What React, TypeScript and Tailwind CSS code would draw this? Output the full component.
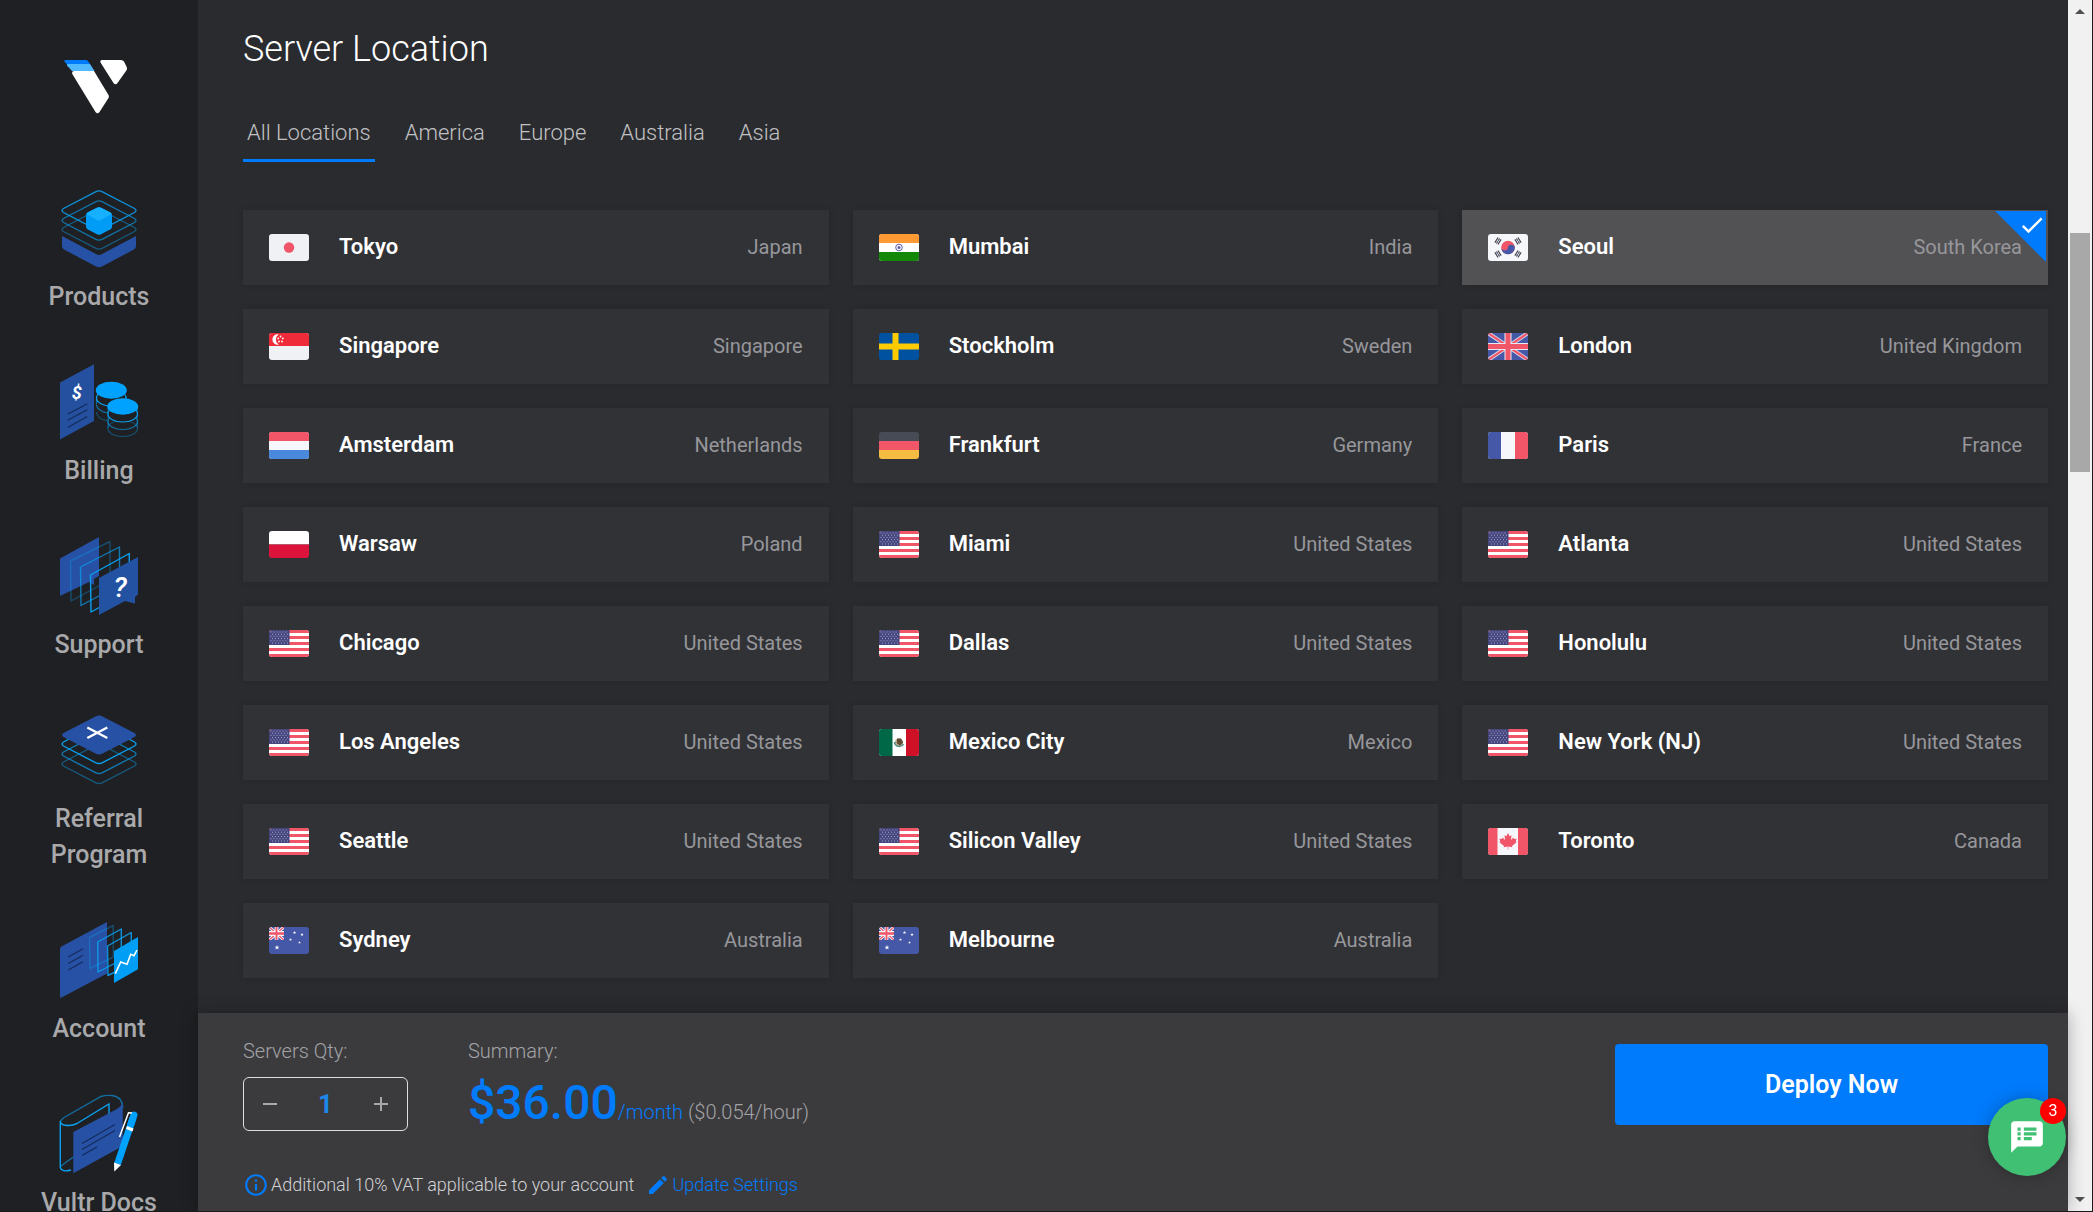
import { useState, type ReactNode } from "react";
import {
  MdAdd,
  MdArrowDropDown,
  MdArrowDropUp,
  MdCheck,
  MdEdit,
  MdInfoOutline,
  MdRemove,
  MdSpeakerNotes,
} from "react-icons/md";

interface ILocation {
  city: string;
  country: string;
}

const LOCATIONS: ILocation[] = [
  { city: "Tokyo", country: "Japan" },
  { city: "Mumbai", country: "India" },
  { city: "Seoul", country: "South Korea" },
  { city: "Singapore", country: "Singapore" },
  { city: "Stockholm", country: "Sweden" },
  { city: "London", country: "United Kingdom" },
  { city: "Amsterdam", country: "Netherlands" },
  { city: "Frankfurt", country: "Germany" },
  { city: "Paris", country: "France" },
  { city: "Warsaw", country: "Poland" },
  { city: "Miami", country: "United States" },
  { city: "Atlanta", country: "United States" },
  { city: "Chicago", country: "United States" },
  { city: "Dallas", country: "United States" },
  { city: "Honolulu", country: "United States" },
  { city: "Los Angeles", country: "United States" },
  { city: "Mexico City", country: "Mexico" },
  { city: "New York (NJ)", country: "United States" },
  { city: "Seattle", country: "United States" },
  { city: "Silicon Valley", country: "United States" },
  { city: "Toronto", country: "Canada" },
  { city: "Sydney", country: "Australia" },
  { city: "Melbourne", country: "Australia" },
];

const TABS = ["All Locations", "America", "Europe", "Australia", "Asia"];

const STAR =
  "M0 -1 L0.25 -0.33 L0.95 -0.31 L0.4 0.13 L0.59 0.81 L0 0.42 L-0.59 0.81 L-0.4 0.13 L-0.95 -0.31 L-0.25 -0.33 Z";

// Diamond outline shared by the stacked icons, centred on y = 0
const DIAMOND =
  "M36.5 -18.6 Q40 -20.5 43.5 -18.6 L75.5 -2 Q78.5 0 75.5 2 L43.5 18.6 Q40 20.5 36.5 18.6 L4.5 2 Q1.5 0 4.5 -2 Z";

const UnionJack = () => (
  <>
    <path fill="#4558a8" d="M0 0h40v27H0z" />
    <path stroke="#d5d9ea" strokeWidth="4" d="M0 0L40 27M40 0L0 27" />
    <path stroke="#f05568" strokeWidth="2.2" d="M0 0L40 27M40 0L0 27" />
    <path stroke="#e6e8f2" strokeWidth="7" d="M20 0v27M0 13.5h40" />
    <path stroke="#f05568" strokeWidth="5" d="M20 0v27M0 13.5h40" />
  </>
);

const Trigram = ({ x, y, angle }: { x: number; y: number; angle: number }) => (
  <g transform={`translate(${x} ${y}) rotate(${angle})`} stroke="#464655" strokeWidth="1.2">
    <path d="M-3 -1.8h6M-3 0h2.7M.3 0H3M-3 1.8h6" />
  </g>
);

const FLAGS: Record<string, ReactNode> = {
  Japan: (
    <>
      <path fill="#f0f1f5" d="M0 0h40v27H0z" />
      <circle cx="20" cy="13.5" r="5.2" fill="#f05468" />
    </>
  ),
  India: (
    <>
      <path fill="#fff" d="M0 0h40v27H0z" />
      <path fill="#ff9933" d="M0 0h40v9H0z" />
      <path fill="#138808" d="M0 18h40v9H0z" />
      <circle cx="20" cy="13.5" r="3.3" fill="none" stroke="#5a5aa8" />
      <circle cx="20" cy="13.5" r="1.5" fill="#5a5aa8" />
    </>
  ),
  "South Korea": (
    <>
      <path fill="#f5f7fb" d="M0 0h40v27H0z" />
      <circle cx="20" cy="13.5" r="6.8" fill="#f05568" />
      <path
        fill="#4558a8"
        transform="rotate(10 20 13.5)"
        d="M13.2 13.5a6.8 6.8 0 0 0 13.6 0a3.4 3.4 0 0 0 -6.8 0a3.4 3.4 0 0 1 -6.8 0z"
      />
      <Trigram x={10} y={7} angle={-58} />
      <Trigram x={30} y={7} angle={58} />
      <Trigram x={10} y={20} angle={58} />
      <Trigram x={30} y={20} angle={-58} />
    </>
  ),
  Singapore: (
    <>
      <path fill="#f0f1f5" d="M0 0h40v27H0z" />
      <path fill="#ef2b3a" d="M0 0h40v13H0z" />
      <path fill="#fff" d="M10 1.5a5.2 5.2 0 1 0 0 10a5.6 5.6 0 0 1 0 -10z" />
      {[
        [11.5, 3.5],
        [9.2, 5.4],
        [13.8, 5.4],
        [10, 8.5],
        [13, 8.5],
      ].map(([x, y]) => (
        <circle key={`${x}-${y}`} cx={x} cy={y} r="0.9" fill="#fff" />
      ))}
    </>
  ),
  Sweden: (
    <>
      <path fill="#0052a0" d="M0 0h40v27H0z" />
      <path stroke="#fecb00" strokeWidth="6" d="M16.5 0v27M0 13.5h40" />
    </>
  ),
  "United Kingdom": <UnionJack />,
  Netherlands: (
    <>
      <path fill="#f5f7fb" d="M0 0h40v27H0z" />
      <path fill="#f05568" d="M0 0h40v9H0z" />
      <path fill="#4a88dc" d="M0 18h40v9H0z" />
    </>
  ),
  Germany: (
    <>
      <path fill="#464b55" d="M0 0h40v9H0z" />
      <path fill="#f05568" d="M0 9h40v9H0z" />
      <path fill="#f5bc42" d="M0 18h40v9H0z" />
    </>
  ),
  France: (
    <>
      <path fill="#f5f7fb" d="M0 0h40v27H0z" />
      <path fill="#4558a8" d="M0 0h13v27H0z" />
      <path fill="#f05568" d="M27 0h13v27H27z" />
    </>
  ),
  Poland: (
    <>
      <path fill="#fff" d="M0 0h40v13.5H0z" />
      <path fill="#dc143c" d="M0 13.5h40V27H0z" />
    </>
  ),
  "United States": (
    <>
      <path fill="#fff" d="M0 0h40v27H0z" />
      <path
        stroke="#f05568"
        strokeWidth="3"
        d="M0 1.5h40M0 7.5h40M0 13.5h40M0 19.5h40M0 25.5h40"
      />
      <path fill="#46467f" d="M0 0h20.5v15H0z" />
      <path
        stroke="#a9a9cc"
        strokeDasharray="1 2"
        d="M1.5 2h18M3 4.2h16M1.5 6.4h18M3 8.6h16M1.5 10.8h18M3 13h16"
      />
    </>
  ),
  Mexico: (
    <>
      <path fill="#fff" d="M0 0h40v27H0z" />
      <path fill="#006847" d="M0 0h13.5v27H0z" />
      <path fill="#ce1126" d="M27 0h13v27H27z" />
      <circle cx="20" cy="13.5" r="4" fill="#b7a689" />
      <path stroke="#4f8f8c" strokeWidth="1.5" fill="none" d="M15.5 13a4.8 4.8 0 0 0 9 2" />
      <path fill="#5f4a34" d="M18 9.5l4 0l2 4l-3 3l-3 -2z" />
    </>
  ),
  Canada: (
    <>
      <path fill="#f5f7fb" d="M0 0h40v27H0z" />
      <path fill="#f05568" d="M0 0h9.5v27H0zM30 0h10v27H30z" />
      <path
        fill="#f05568"
        d="M20 5l1.7 3.2l1.8 -1l-.6 4.8l2.6 -2.4l.6 1.5l2.6 -.4l-1 2.8l.9 .8l-4.6 3.6l.3 1.3l-4 -.6v3h-.6v-3l-4 .6l.3 -1.3l-4.6 -3.6l.9 -.8l-1 -2.8l2.6 .4l.6 -1.5l2.6 2.4l-.6 -4.8l1.8 1z"
      />
    </>
  ),
  Australia: (
    <>
      <path fill="#4558a8" d="M0 0h40v27H0z" />
      <svg width="15" height="13" viewBox="0 0 40 27" preserveAspectRatio="none">
        <path fill="#4558a8" d="M0 0h40v27H0z" />
        <path stroke="#f5f7fb" strokeWidth="7" d="M0 0L40 27M40 0L0 27" />
        <path stroke="#f05568" strokeWidth="3" d="M0 0L40 27M40 0L0 27" />
        <path stroke="#f5f7fb" strokeWidth="10" d="M20 0v27M0 13.5h40" />
        <path stroke="#f05568" strokeWidth="5" d="M20 0v27M0 13.5h40" />
      </svg>
      {[
        [8, 20.5, 2.6],
        [25.5, 5.5, 1.8],
        [33, 7.5, 1.8],
        [21.5, 12.5, 1.6],
        [30.5, 15.5, 1.4],
      ].map(([x, y, r]) => (
        <path
          key={`${x}-${y}`}
          d={STAR}
          fill="#f5f7fb"
          transform={`translate(${x} ${y}) scale(${r})`}
        />
      ))}
    </>
  ),
};

const ProductsIcon = () => (
  <>
    <path fill="#2751a5" d="M3 48L37 66Q40 68 43 66L77 48V58Q77 60.5 75 61.5L43 78.5Q40 80 37 78.5L5 61.5Q3 60.5 3 58Z" />
    <g fill="none" stroke="#0aa0f0" strokeWidth="1.3">
      <path d={DIAMOND} transform="translate(0 41.5)" opacity="0.45" />
      <path d={DIAMOND} transform="translate(0 32.5)" opacity="0.65" />
      <path d={DIAMOND} transform="translate(0 22.5)" opacity="0.9" />
    </g>
    <path fill="#009cf5" d="M27 27Q27 25.5 28.5 24.5L38 19.7Q40 18.7 42 19.7L51.5 24.5Q53 25.5 53 27V38.5Q53 40.5 51.5 41.3L42 46.3Q40 47.3 38 46.3L28.5 41.3Q27 40.5 27 38.5Z" />
    <path fill="#16b0ff" d="M27.5 26Q28 25 28.5 24.5L38 19.7Q40 18.7 42 19.7L51.5 24.5Q52.5 25 52.5 26L42 32Q40 33 38 32Z" />
  </>
);

const BillingIcon = () => (
  <>
    <path fill="#24509f" d="M1 20.5L35 2.3V59L1 77.5Z" />
    <path stroke="#142c5c" strokeWidth="1.3" d="M8.7 52.3L28.3 41.7M8.7 58.3L28.3 47.7M8.7 65.5L28.3 54.5" />
    <text
      x="17.7"
      y="37"
      textAnchor="middle"
      fill="#fff"
      className="font-['Roboto',sans-serif] text-[18px] font-bold italic"
    >
      $
    </text>
    <g fill="none" stroke="#0aa0f0" strokeWidth="1.2">
      <ellipse cx="52.3" cy="36" rx="14.8" ry="8" />
      <path d="M37.5 42.5C37.5 47 43 50.5 50 51M67 43V35M37.5 34V42" opacity="0.6" />
      <path d="M37.5 50C37.5 54 42 58 48 58.7" opacity="0.4" />
    </g>
    <ellipse cx="52.3" cy="28.3" rx="15.5" ry="8.5" fill="#00a2ff" />
    <g stroke="#0aa0f0" strokeWidth="1.2">
      <ellipse cx="63.7" cy="66.5" rx="14.8" ry="8" fill="none" opacity="0.4" />
      <ellipse cx="63.7" cy="59.5" rx="14.8" ry="8" fill="#1f2023" fillOpacity="0.5" opacity="0.65" />
      <ellipse cx="63.7" cy="52" rx="14.8" ry="8" fill="#1f2023" />
      <path d="M49 46V66M78.5 46V66" opacity="0.35" />
    </g>
    <ellipse cx="63.7" cy="44.5" rx="15.5" ry="8.3" fill="#00a2ff" />
  </>
);

const SupportIcon = () => (
  <>
    <path fill="#2751a5" d="M1 22.5L40 1V40L35 43V49L30 46L1 60Z" />
    <g fill="none" stroke="#0aa0f0" strokeWidth="1.4" strokeLinejoin="round">
      <path d="M11.5 25L51 5.5V44L12 65Z" opacity="0.35" />
      <path d="M21.5 31L60.5 11V49L22 69.5Z" opacity="0.7" />
      <path d="M31.5 39L70.3 17.5V55L32 76Z" />
    </g>
    <path fill="#2452a3" d="M40 42L79 21V58.5L76 61V67.5L66 65L40 79Z" />
    <text
      x="61"
      y="61"
      textAnchor="middle"
      fill="#fff"
      className="font-['Roboto',sans-serif] text-[28px] font-medium italic"
    >
      ?
    </text>
  </>
);

const ReferralIcon = () => (
  <>
    <g fill="none" stroke="#0aa0f0" strokeWidth="1.4">
      <path d={DIAMOND} transform="translate(0 54)" opacity="0.45" />
      <path d={DIAMOND} transform="translate(0 44)" opacity="0.7" />
      <path d={DIAMOND} transform="translate(0 34)" />
    </g>
    <path fill="#2751a5" d={DIAMOND} transform="translate(0 25)" />
    <path stroke="#fff" strokeWidth="2.4" d="M28.3 17.5L48.3 28M48.3 17.5L28.3 28" />
  </>
);

const AccountIcon = () => (
  <>
    <path fill="#2751a5" d="M1 29Q1 27.5 2.5 26.5L48 2V53.5L2.5 77.5Q1 78 1 77Z" />
    <path stroke="#142c5c" strokeWidth="1.3" d="M9.3 37L24 28.7M9.3 43.5L24 35.2M9.3 50L24 41.7" />
    <g fill="none" stroke="#0aa0f0" strokeWidth="1.4" strokeLinejoin="round">
      <path d="M30.5 17.5L54.3 5.5V37L31 48.5Z" opacity="0.35" />
      <path d="M38.7 22L62.3 9V40L39 52Z" opacity="0.9" />
      <path d="M48.5 26L72.3 12.5V44L49 55.5Z" opacity="0.9" />
    </g>
    <path fill="#009ff5" d="M55 31L79 17V49.3L55 63Z" />
    <path
      fill="none"
      stroke="#fff"
      strokeWidth="1.6"
      d="M56.3 53.7L61.7 42L68 44.3L71.7 34.3L75 35.7L78 30"
    />
  </>
);

const DocsIcon = () => (
  <>
    <g fill="none" stroke="#0aa0f0" strokeWidth="1.4">
      <path d="M1.3 28Q1.5 26 5 23.5L42 2.5Q46 1 53 1.5Q63.7 3 63.7 14" opacity="0.6" />
      <path d="M1.3 73Q4 70 16 62" opacity="0.6" />
      <path d="M50 20V10L18 29.5Q12 32.5 5 31Q1.3 30 1.3 27V73.5Q3 78.5 12 76" />
    </g>
    <path fill="#2751a5" d="M14.3 38L58 15Q62 12.5 63.7 9V52L14.3 79.3Z" />
    <path stroke="#142c5c" strokeWidth="1.3" d="M23 49.5L56 30.5M23 55.5L56 36.5M23 61.5L38 53" />
    <path stroke="#00a2ff" strokeWidth="7" strokeLinecap="round" d="M75 21L72 30" />
    <path stroke="#00a2ff" strokeWidth="7" d="M74 24L58.5 70" />
    <path stroke="#fff" strokeWidth="3" d="M67.5 33.5L74 36" />
    <path fill="#fff" d="M55 68.5L62 71L55.3 77.5Z" />
    <path fill="none" stroke="#fff" strokeWidth="1.5" d="M73 19L69.5 18.7L60.5 43" />
  </>
);

const NAV_ITEMS = [
  { label: "Products", icon: <ProductsIcon /> },
  { label: "Billing", icon: <BillingIcon /> },
  { label: "Support", icon: <SupportIcon /> },
  { label: "Referral Program", icon: <ReferralIcon /> },
  { label: "Account", icon: <AccountIcon /> },
  { label: "Vultr Docs", icon: <DocsIcon /> },
];

const Sidebar = () => (
  <aside className="flex w-[198px] shrink-0 flex-col items-center overflow-hidden bg-[#1f2023] pt-[60px]">
    <a href="#home" aria-label="Vultr" className="pr-1.5">
      <svg className="h-[54px] w-16" viewBox="0 0 64 54">
        <path fill="#007bfc" d="M1.5 0H22Q23.5 0 24.3 1.5L26 4H3L.3 1.8Q0 0 1.5 0Z" />
        <path fill="#51b9ff" d="M3.5 4H26L30.5 11H8L3 5.5Q2.5 4 3.5 4Z" />
        <path
          fill="#fff"
          d="M10 11H30L44.5 35Q45.2 36.5 44.5 38L35.5 52Q33.5 54.5 31.5 52L8.3 14Q7.5 11 10 11Z"
        />
        <path
          fill="#fff"
          d="M38 0H57Q59 0 60 1.5L62.7 7Q63.5 8.5 62.7 10L53.5 23Q51.5 25.5 49.5 23L36.5 2.5Q35.8 0 38 0Z"
        />
      </svg>
    </a>
    <nav className="mt-[74px] flex flex-col gap-[47px]">
      {NAV_ITEMS.map(({ label, icon }) => (
        <a
          key={label}
          href="#nav"
          className="flex w-36 flex-col items-center gap-[11px] text-center text-[25px] leading-9 font-medium text-[#a9a9ab]"
        >
          <svg className="size-20" viewBox="0 0 80 80">
            {icon}
          </svg>
          {label}
        </a>
      ))}
    </nav>
  </aside>
);

interface LocationCardProps {
  location: ILocation;
  selected: boolean;
  onSelect: (city: string) => void;
}

const LocationCard = ({ location, selected, onSelect }: LocationCardProps) => (
  <button
    onClick={() => onSelect(location.city)}
    aria-pressed={selected}
    className={`relative flex h-[75px] items-center px-[26px] shadow-[0_0_6px_rgba(0,0,0,0.12)] ${
      selected ? "bg-[#525254]" : "bg-[#313236]"
    }`}
  >
    <svg className="h-[27px] w-10 rounded-[3px]" viewBox="0 0 40 27">
      {FLAGS[location.country]}
    </svg>
    <span className="ml-[30px] grow pb-0.5 text-left text-[22px] leading-7 font-semibold text-white">
      {location.city}
    </span>
    <span className="pb-0.5 text-xl text-[#97979b]">{location.country}</span>
    {selected && (
      <span className="absolute top-px right-0.5 flex size-[51px] justify-end bg-[#007bfc] text-white [clip-path:polygon(0_0,100%_0,100%_100%)]">
        <MdCheck className="size-7" />
      </span>
    )}
  </button>
);

const DeployBar = () => {
  const [qty, setQty] = useState(1);

  return (
    <footer className="relative bg-[#3b3b3e] pt-6 pr-5 pb-3 pl-[45px] shadow-[0_0_16px_rgba(0,0,0,0.3)]">
      <div className="flex items-start">
        <div className="w-[225px]">
          <label htmlFor="qty" className="block text-xl font-light text-[#a3a3a6]">
            Servers Qty:
          </label>
          <div className="mt-3 flex h-[54px] w-[165px] items-center justify-between rounded-md border border-[#dedede] px-3.5 text-[#a9a9ab]">
            <button aria-label="Remove server" onClick={() => setQty(Math.max(1, qty - 1))}>
              <MdRemove className="size-6" />
            </button>
            <input
              id="qty"
              value={qty}
              readOnly
              className="w-12 bg-transparent text-center text-[26px] font-bold text-[#1e87e8] outline-none"
            />
            <button aria-label="Add server" onClick={() => setQty(qty + 1)}>
              <MdAdd className="size-6" />
            </button>
          </div>
        </div>
        <div className="grow text-xl font-light text-[#a3a3a6]">
          <div>Summary:</div>
          <div className="mt-2.5">
            <span className="text-5xl leading-14 font-medium text-[#007bfc]">
              ${(36 * qty).toFixed(2)}
            </span>
            <span className="text-[#007bfc]">/month</span> (${(0.054 * qty).toFixed(3)}/hour)
          </div>
        </div>
        <button className="mt-[7px] h-[81px] w-[433px] rounded bg-[#007bfc] text-[25px] font-semibold text-white">
          Deploy Now
        </button>
      </div>
      <div className="mt-10 flex h-7 items-center text-lg font-light text-[#d2d2d4]">
        <MdInfoOutline className="mr-0.5 size-[26px] text-[#007bfc]" />
        Additional 10% VAT applicable to your account
        <a href="#settings" className="ml-3 flex items-center gap-0.5 text-[#007bfc]">
          <MdEdit className="size-6" />
          Update Settings
        </a>
      </div>
    </footer>
  );
};

const Scrollbar = () => (
  <div className="flex w-6 shrink-0 flex-col items-center justify-between bg-[#f1f1f1] text-[#505050]">
    <MdArrowDropUp className="size-6" />
    <div className="flex w-full grow flex-col px-0.5 pt-[209px]">
      <div className="h-[239px] bg-[#a8a8a8]" />
    </div>
    <MdArrowDropDown className="size-6" />
  </div>
);

const App = () => {
  const [tab, setTab] = useState(TABS[0]);
  const [city, setCity] = useState("Seoul");

  return (
    <div className="flex h-screen overflow-hidden border-r border-b border-[#1b1b1d] bg-[#2a2b2f] font-['Roboto',sans-serif]">
      <Sidebar />
      <div className="flex min-w-0 grow flex-col">
        <main className="min-h-0 grow overflow-hidden pt-[29px] pr-5 pl-[45px]">
          <h1 className="text-4xl font-light text-white">Server Location</h1>
          <div className="mt-9 flex gap-[26px]">
            {TABS.map((name) => (
              <button
                key={name}
                onClick={() => setTab(name)}
                className={`h-[57px] border-b-3 px-1 text-[22px] font-light text-[#c2c2c4] ${
                  name === tab ? "border-[#007bfc]" : "border-transparent"
                }`}
              >
                {name}
              </button>
            ))}
          </div>
          <div className="mt-12 grid grid-cols-3 gap-6">
            {LOCATIONS.map((location) => (
              <LocationCard
                key={location.city}
                location={location}
                selected={location.city === city}
                onSelect={setCity}
              />
            ))}
          </div>
        </main>
        <DeployBar />
      </div>
      <Scrollbar />
      <button
        aria-label="Open chat"
        className="fixed right-[27px] bottom-9 flex size-[78px] items-center justify-center rounded-full bg-[#40c073] text-white shadow-[0_0_16px_rgba(0,0,0,0.25)]"
      >
        <MdSpeakerNotes className="size-[38px]" />
        <span className="absolute top-0 right-0 flex size-[26px] items-center justify-center rounded-full bg-[#ff0000] text-base">
          3
        </span>
      </button>
    </div>
  );
};

export default App;
